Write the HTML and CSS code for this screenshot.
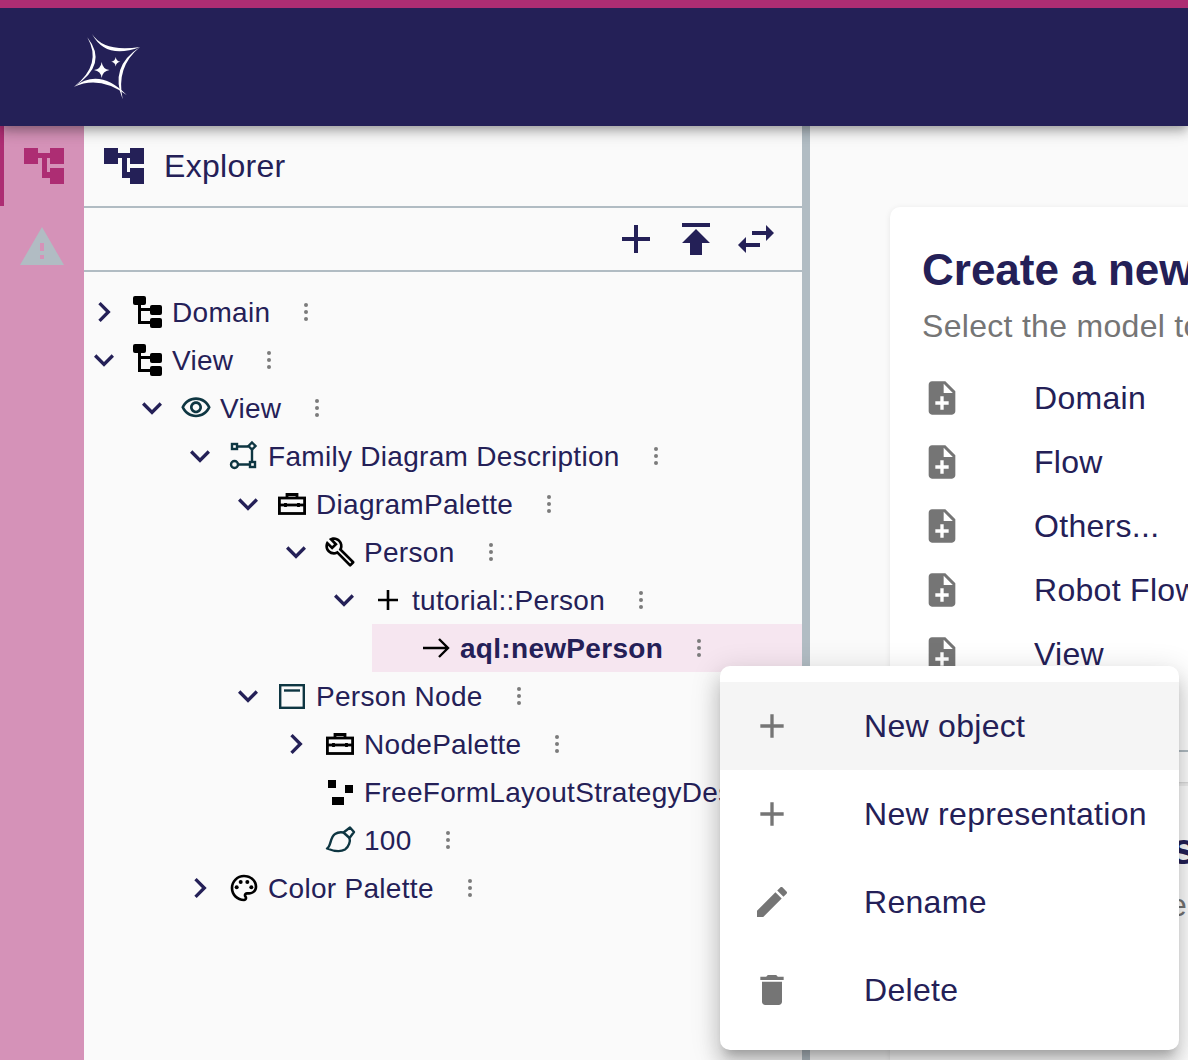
FILE: index.html
```html
<!DOCTYPE html>
<html lang="en">
<head>
    <meta charset="UTF-8">
    <title>Sirius Web</title>
    <link rel="stylesheet" href="styles.css">
</head>
<body>
<header class="navbar">
    <svg class="logo" viewBox="70 30 74 74" width="74" height="74" fill="#fff">
        <path d="M92 34Q104 52.500 140 47Q106 60 92 34Z"/>
        <path d="M140 47Q115.600 66.800 122.700 99.300Q109 66.800 140 47Z"/>
        <path d="M126.700 95Q99.600 67.200 74 86.700Q99.600 75 126.700 95Z"/>
        <path d="M74 86.700Q102.700 64.600 87.300 37.300Q109 64.600 74 86.700Z"/>
        <path d="M101.700 62Q102.500 69 109.500 70Q102.500 71 101.700 78Q100.900 71 94 70Q100.900 69 101.700 62Z"/>
        <path d="M115.700 57Q116.200 61.200 120.200 61.700Q116.200 62.200 115.700 66.400Q115.200 62.200 111.200 61.700Q115.200 61.200 115.700 57Z"/>
    </svg>
</header>

<main class="workbench">
    <nav class="rail">
        <div class="rail-item rail-item-active">
            <svg viewBox="0 0 40 36" width="40" height="36" fill="#ad2d73"><use href="#explorer-shape"/></svg>
        </div>
        <div class="rail-item">
            <svg viewBox="0 0 44 38" width="44" height="38">
                <path d="M22 0L44 38H0Z" fill="#b1bcc3"/>
                <path d="M20 16h4v8h-4zM20 28h4v4h-4z" fill="#d592b8"/>
            </svg>
        </div>
    </nav>

    <section class="explorer">
        <div class="explorer-title">
            <svg viewBox="0 0 40 36" width="40" height="36" fill="#242057">
                <path id="explorer-shape" d="M0 0h14v5h12V0h14v16H26v-6h-3v14h3v-4h14v16H26v-6h-8V10h-4v6H0z"/>
            </svg>
            <span>Explorer</span>
        </div>
        <div class="explorer-toolbar">
            <svg class="tool" viewBox="0 0 24 24"><path d="M19 13h-6v6h-2v-6H5v-2h6V5h2v6h6v2z"/></svg>
            <svg class="tool" viewBox="0 0 24 24"><path d="M5 4v2h14V4H5zm0 10h4v6h6v-6h4l-7-7-7 7z"/></svg>
            <svg class="tool" viewBox="0 0 24 24"><path d="M6.99 11L3 15l3.990 4v-3H14v-2H6.990v-3zM21 9l-3.990-4v3H10v2h7.010v3L21 9z"/></svg>
        </div>

        <ul class="tree">
            <li>
                <div class="row">
                    <svg class="chevron" viewBox="0 0 24 24"><path d="M10 6L8.590 7.410 13.170 12l-4.580 4.590L10 18l6-6z"/></svg>
                    <svg class="node-icon" viewBox="0 0 32 32"><use href="#model-shape"/></svg>
                    <span class="label">Domain</span>
                    <svg class="kebab" viewBox="0 0 6 22"><circle cx="3" cy="4" r="2"/><circle cx="3" cy="11" r="2"/><circle cx="3" cy="18" r="2"/></svg>
                </div>
            </li>
            <li>
                <div class="row">
                    <svg class="chevron" viewBox="0 0 24 24"><path d="M16.590 8.590L12 13.170 7.410 8.590 6 10l6 6 6-6z"/></svg>
                    <svg class="node-icon" viewBox="0 0 32 32">
                        <g id="model-shape">
                            <rect x="1" y="0" width="13" height="9" rx="2"/>
                            <rect x="18" y="9" width="12" height="10" rx="2"/>
                            <rect x="18" y="22" width="12" height="10" rx="2"/>
                            <path d="M7.500 9V26.500H18M7.500 13.500H18" fill="none" stroke="#000" stroke-width="3"/>
                        </g>
                    </svg>
                    <span class="label">View</span>
                    <svg class="kebab" viewBox="0 0 6 22"><circle cx="3" cy="4" r="2"/><circle cx="3" cy="11" r="2"/><circle cx="3" cy="18" r="2"/></svg>
                </div>
                <ul>
                    <li>
                        <div class="row">
                            <svg class="chevron" viewBox="0 0 24 24"><path d="M16.590 8.590L12 13.170 7.410 8.590 6 10l6 6 6-6z"/></svg>
                            <svg class="node-icon node-icon-teal" viewBox="0 0 24 24"><path d="M12 6c3.790 0 7.170 2.130 8.820 5.500C19.170 14.870 15.790 17 12 17s-7.170-2.130-8.820-5.500C4.830 8.130 8.210 6 12 6m0-2C7 4 2.730 7.110 1 11.500 2.730 15.890 7 19 12 19s9.270-3.110 11-7.500C21.270 7.110 17 4 12 4zm0 5c1.380 0 2.500 1.120 2.500 2.500S13.380 14 12 14s-2.500-1.120-2.500-2.500S10.620 9 12 9m0-2c-2.480 0-4.500 2.020-4.500 4.500S9.520 16 12 16s4.500-2.020 4.500-4.500S14.480 7 12 7z"/></svg>
                            <span class="label">View</span>
                            <svg class="kebab" viewBox="0 0 6 22"><circle cx="3" cy="4" r="2"/><circle cx="3" cy="11" r="2"/><circle cx="3" cy="18" r="2"/></svg>
                        </div>
                        <ul>
                            <li>
                                <div class="row">
                                    <svg class="chevron" viewBox="0 0 24 24"><path d="M16.590 8.590L12 13.170 7.410 8.590 6 10l6 6 6-6z"/></svg>
                                    <svg class="node-icon" viewBox="0 0 32 32" fill="none" stroke="#0e3642" stroke-width="2.400">
                                        <rect x="4" y="4" width="5" height="5"/>
                                        <path d="M24 2.500l3.500 3.500-3.500 3.500-3.500-3.500z"/>
                                        <circle cx="6.500" cy="24.500" r="3.500"/>
                                        <rect x="22" y="22" width="5" height="5"/>
                                        <path d="M9 6.500h11.500M24 9.500V22M10 24.500h12"/>
                                    </svg>
                                    <span class="label">Family Diagram Description</span>
                                    <svg class="kebab" viewBox="0 0 6 22"><circle cx="3" cy="4" r="2"/><circle cx="3" cy="11" r="2"/><circle cx="3" cy="18" r="2"/></svg>
                                </div>
                                <ul>
                                    <li>
                                        <div class="row">
                                            <svg class="chevron" viewBox="0 0 24 24"><path d="M16.590 8.590L12 13.170 7.410 8.590 6 10l6 6 6-6z"/></svg>
                                            <svg class="node-icon" viewBox="0 0 32 32">
                                                <g id="palette-shape" fill="none" stroke="#000" stroke-width="2.800">
                                                    <path d="M11 10V6.500h10V10"/>
                                                    <rect x="3.400" y="10" width="25.200" height="15.500"/>
                                                    <path d="M3.500 17h25"/>
                                                    <path d="M9.500 15v4M22.500 15v4"/>
                                                </g>
                                            </svg>
                                            <span class="label">DiagramPalette</span>
                                            <svg class="kebab" viewBox="0 0 6 22"><circle cx="3" cy="4" r="2"/><circle cx="3" cy="11" r="2"/><circle cx="3" cy="18" r="2"/></svg>
                                        </div>
                                        <ul>
                                            <li>
                                                <div class="row">
                                                    <svg class="chevron" viewBox="0 0 24 24"><path d="M16.590 8.590L12 13.170 7.410 8.590 6 10l6 6 6-6z"/></svg>
                                                    <svg class="node-icon" viewBox="0 0 24 24"><path d="M22.610 19L13.530 9.910C14.460 7.570 14 4.810 12.090 2.910C9.790 .61 6.210 .4 3.660 2.250L7.500 6.110L6.080 7.500L2.250 3.690C.39 6.230 .6 9.820 2.900 12.110C4.760 13.970 7.470 14.460 9.790 13.590L18.900 22.700C19.290 23.090 19.920 23.090 20.310 22.700L22.610 20.400C23 20 23 19.390 22.610 19M19.610 20.590L10.150 11.130C9.540 11.580 8.860 11.850 8.150 11.950C6.790 12.150 5.360 11.740 4.320 10.700C3.370 9.760 2.930 8.500 3 7.260L6.090 10.350L10.330 6.110L7.240 3C8.500 2.950 9.730 3.390 10.680 4.330C11.760 5.410 12.170 6.900 11.920 8.290C11.800 9 11.500 9.660 11.040 10.250L20.500 19.700L19.610 20.590Z"/></svg>
                                                    <span class="label">Person</span>
                                                    <svg class="kebab" viewBox="0 0 6 22"><circle cx="3" cy="4" r="2"/><circle cx="3" cy="11" r="2"/><circle cx="3" cy="18" r="2"/></svg>
                                                </div>
                                                <ul>
                                                    <li>
                                                        <div class="row">
                                                            <svg class="chevron" viewBox="0 0 24 24"><path d="M16.590 8.590L12 13.170 7.410 8.590 6 10l6 6 6-6z"/></svg>
                                                            <svg class="node-icon" viewBox="0 0 32 32"><path d="M6 16h20M16 6v20" stroke="#000" stroke-width="2.600"/></svg>
                                                            <span class="label">tutorial::Person</span>
                                                            <svg class="kebab" viewBox="0 0 6 22"><circle cx="3" cy="4" r="2"/><circle cx="3" cy="11" r="2"/><circle cx="3" cy="18" r="2"/></svg>
                                                        </div>
                                                        <ul>
                                                            <li>
                                                                <div class="row row-selected">
                                                                    <span class="chevron"></span>
                                                                    <svg class="node-icon" viewBox="0 0 32 32"><path d="M3 16h25M19 7l9 9-9 9" fill="none" stroke="#000" stroke-width="2.400"/></svg>
                                                                    <span class="label">aql:newPerson</span>
                                                                    <svg class="kebab" viewBox="0 0 6 22"><circle cx="3" cy="4" r="2"/><circle cx="3" cy="11" r="2"/><circle cx="3" cy="18" r="2"/></svg>
                                                                </div>
                                                            </li>
                                                        </ul>
                                                    </li>
                                                </ul>
                                            </li>
                                        </ul>
                                    </li>
                                    <li>
                                        <div class="row">
                                            <svg class="chevron" viewBox="0 0 24 24"><path d="M16.590 8.590L12 13.170 7.410 8.590 6 10l6 6 6-6z"/></svg>
                                            <svg class="node-icon" viewBox="0 0 32 32" fill="none" stroke="#0e3642">
                                                <rect x="4.200" y="5.200" width="23.600" height="22.600" stroke-width="2.400"/>
                                                <path d="M8 10.500h16" stroke-width="2.400"/>
                                            </svg>
                                            <span class="label">Person Node</span>
                                            <svg class="kebab" viewBox="0 0 6 22"><circle cx="3" cy="4" r="2"/><circle cx="3" cy="11" r="2"/><circle cx="3" cy="18" r="2"/></svg>
                                        </div>
                                        <ul>
                                            <li>
                                                <div class="row">
                                                    <svg class="chevron" viewBox="0 0 24 24"><path d="M10 6L8.590 7.410 13.170 12l-4.580 4.590L10 18l6-6z"/></svg>
                                                    <svg class="node-icon" viewBox="0 0 32 32"><use href="#palette-shape"/></svg>
                                                    <span class="label">NodePalette</span>
                                                    <svg class="kebab" viewBox="0 0 6 22"><circle cx="3" cy="4" r="2"/><circle cx="3" cy="11" r="2"/><circle cx="3" cy="18" r="2"/></svg>
                                                </div>
                                            </li>
                                            <li>
                                                <div class="row">
                                                    <span class="chevron"></span>
                                                    <svg class="node-icon" viewBox="0 0 32 32"><path d="M4 4h8v8H4zM21 9h8v8h-8zM8 21h12v8H8z"/></svg>
                                                    <span class="label">FreeFormLayoutStrategyDescription</span>
                                                </div>
                                            </li>
                                            <li>
                                                <div class="row">
                                                    <span class="chevron"></span>
                                                    <svg class="node-icon" viewBox="0 0 32 32" fill="none" stroke="#0e3642" stroke-width="2.400" stroke-linejoin="round">
                                                        <path d="M3 24.500C7 23 6 13 11 10C14 8 17 8 19.500 8.500L26 3.500L30 8L25.500 14C26.500 17 25 23 21 25.500C15 29 8 26.500 3 24.500Z"/>
                                                        <path d="M19.500 8.500L25.500 14"/>
                                                    </svg>
                                                    <span class="label">100</span>
                                                    <svg class="kebab" viewBox="0 0 6 22"><circle cx="3" cy="4" r="2"/><circle cx="3" cy="11" r="2"/><circle cx="3" cy="18" r="2"/></svg>
                                                </div>
                                            </li>
                                        </ul>
                                    </li>
                                </ul>
                            </li>
                            <li>
                                <div class="row">
                                    <svg class="chevron" viewBox="0 0 24 24"><path d="M10 6L8.590 7.410 13.170 12l-4.580 4.590L10 18l6-6z"/></svg>
                                    <svg class="node-icon" viewBox="0 0 24 24">
                                        <path d="M12 22C6.490 22 2 17.510 2 12S6.490 2 12 2s10 4.040 10 9c0 3.310-2.690 6-6 6h-1.770c-.28 0-.5.22-.5.5 0 .12.05.23.13.33.41.47.64 1.060.64 1.670 0 1.380-1.120 2.500-2.500 2.500zm0-18c-4.410 0-8 3.590-8 8s3.590 8 8 8c.28 0 .5-.22.5-.5 0-.16-.08-.28-.14-.35-.41-.46-.63-1.050-.63-1.650 0-1.380 1.120-2.500 2.500-2.500H16c2.210 0 4-1.790 4-4 0-3.860-3.590-7-8-7z"/>
                                        <circle cx="6.500" cy="11.500" r="1.500"/><circle cx="9.500" cy="7.500" r="1.500"/><circle cx="14.500" cy="7.500" r="1.500"/><circle cx="17.500" cy="11.500" r="1.500"/>
                                    </svg>
                                    <span class="label">Color Palette</span>
                                    <svg class="kebab" viewBox="0 0 6 22"><circle cx="3" cy="4" r="2"/><circle cx="3" cy="11" r="2"/><circle cx="3" cy="18" r="2"/></svg>
                                </div>
                            </li>
                        </ul>
                    </li>
                </ul>
            </li>
        </ul>
    </section>

    <div class="splitter"></div>

    <section class="onboard">
        <div class="card">
            <h2 class="card-title">Create a new Model</h2>
            <p class="card-subtitle">Select the model to create</p>
            <ul class="card-list">
                <li><svg class="file-icon" viewBox="0 0 24 24"><use href="#file-add"/></svg><span>Domain</span></li>
                <li><svg class="file-icon" viewBox="0 0 24 24"><use href="#file-add"/></svg><span>Flow</span></li>
                <li><svg class="file-icon" viewBox="0 0 24 24"><use href="#file-add"/></svg><span>Others...</span></li>
                <li><svg class="file-icon" viewBox="0 0 24 24"><use href="#file-add"/></svg><span>Robot Flow</span></li>
                <li><svg class="file-icon" viewBox="0 0 24 24"><path id="file-add" d="M14 2H6c-1.100 0-1.990.9-1.990 2L4 20c0 1.100.89 2 1.990 2H18c1.100 0 2-.9 2-2V8l-6-6zm2 14h-3v3h-2v-3H8v-2h3v-3h2v3h3v2zm-3-7V3.500L18.500 9H13z"/></svg><span>View</span></li>
            </ul>
            <div class="card-footer"></div>
        </div>
        <div class="card card-tall">
            <h2 class="card-title">Open an existing Representation</h2>
            <p class="card-subtitle">Select the representation to open</p>
        </div>
    </section>

    <div class="menu">
        <div class="menu-item menu-item-hover">
            <svg class="menu-icon" viewBox="0 0 24 24"><path d="M19 13h-6v6h-2v-6H5v-2h6V5h2v6h6v2z"/></svg>
            <span>New object</span>
        </div>
        <div class="menu-item">
            <svg class="menu-icon" viewBox="0 0 24 24"><path d="M19 13h-6v6h-2v-6H5v-2h6V5h2v6h6v2z"/></svg>
            <span>New representation</span>
        </div>
        <div class="menu-item">
            <svg class="menu-icon" viewBox="0 0 24 24"><path d="M3 17.250V21h3.750L17.810 9.940l-3.750-3.750L3 17.250zM20.710 7.040c.39-.39.39-1.020 0-1.410l-2.340-2.340c-.39-.39-1.020-.39-1.410 0l-1.830 1.830 3.750 3.750 1.830-1.830z"/></svg>
            <span>Rename</span>
        </div>
        <div class="menu-item">
            <svg class="menu-icon" viewBox="0 0 24 24"><path d="M6 19c0 1.100.9 2 2 2h8c1.100 0 2-.9 2-2V7H6v12zM19 4h-3.500l-1-1h-5l-1 1H5v2h14V4z"/></svg>
            <span>Delete</span>
        </div>
    </div>
</main>
</body>
</html>
```

FILE: styles.css
```css
* {
    box-sizing: border-box;
}

html, body {
    margin: 0;
    height: 100%;
    overflow: hidden;
}

body {
    display: flex;
    flex-direction: column;
    font-family: "Liberation Sans", Arial, sans-serif;
    color: #242057;
    background-color: #fafafa;
}

ul {
    list-style: none;
    margin: 0;
    padding: 0;
}

.navbar {
    position: relative;
    z-index: 2;
    flex: none;
    display: flex;
    align-items: center;
    height: 126px;
    padding-left: 70px;
    background-color: #242057;
    border-top: 8px solid #ad2d73;
    box-shadow: 0 4px 8px -2px rgba(0, 0, 0, .2), 0 8px 10px 0 rgba(0, 0, 0, .14), 0 2px 20px 0 rgba(0, 0, 0, .12);
}

.workbench {
    position: relative;
    flex: 1;
    display: flex;
    min-height: 0;
}

.rail {
    flex: none;
    width: 84px;
    background-color: #d592b8;
}

.rail-item {
    display: flex;
    align-items: center;
    justify-content: center;
    height: 80px;
}

.rail-item-active {
    justify-content: flex-start;
    padding-left: 20px;
    border-left: 4px solid #ad2d73;
}

.explorer {
    flex: none;
    width: 718px;
    overflow: hidden;
}

.explorer-title {
    display: flex;
    align-items: center;
    gap: 20px;
    height: 82px;
    padding-left: 20px;
    font-size: 32px;
    letter-spacing: .3px;
    border-bottom: 2px solid #b1bcc3;
}

.explorer-toolbar {
    display: flex;
    justify-content: flex-end;
    gap: 12px;
    height: 64px;
    padding: 7px 22px 0 0;
    border-bottom: 2px solid #b1bcc3;
}

.tool {
    width: 48px;
    height: 48px;
    fill: #242057;
}

.tree {
    padding-top: 16px;
}

.tree ul {
    padding-left: 48px;
}

.row {
    display: flex;
    align-items: center;
    height: 48px;
    white-space: nowrap;
}

.row-selected {
    background-color: #f6e6f0;
    font-weight: 700;
}

.chevron {
    flex: none;
    width: 40px;
    height: 40px;
    fill: #242057;
}

.node-icon {
    flex: none;
    width: 32px;
    height: 32px;
    margin: 0 8px;
}

.node-icon-teal {
    fill: #0e3642;
}

.label {
    padding-top: 2px;
    font-size: 28px;
    letter-spacing: .3px;
}

.kebab {
    flex: none;
    width: 6px;
    height: 22px;
    margin-left: 33px;
    fill: #7b7b7b;
}

.splitter {
    flex: none;
    width: 8px;
    background-color: #b1bcc3;
}

.onboard {
    flex: 1;
    min-width: 0;
    padding: 81px 0 0 80px;
    overflow: hidden;
}

.card {
    width: 600px;
    margin-bottom: 4px;
    padding: 33px 32px 0;
    background-color: #fff;
    border-radius: 10px;
    box-shadow: 0 2px 2px -1px rgba(0, 0, 0, .1), 0 1px 6px 0 rgba(0, 0, 0, .08);
}

.card-tall {
    min-height: 400px;
}

.card-title {
    margin: 0;
    font-size: 44px;
    line-height: 60px;
    font-weight: 700;
    white-space: nowrap;
}

.card-subtitle {
    margin: 2px 0 16px;
    font-size: 32px;
    line-height: 48px;
    letter-spacing: .3px;
    color: #757575;
    white-space: nowrap;
}

.card-list {
    padding-bottom: 64px;
    border-bottom: 2px solid #b1bcc3;
}

.card-list li {
    display: flex;
    align-items: center;
    height: 64px;
    font-size: 32px;
    letter-spacing: .3px;
}

.file-icon {
    flex: none;
    width: 40px;
    height: 40px;
    margin-right: 72px;
    fill: #757575;
}

.card-footer {
    height: 30px;
}

.menu {
    position: absolute;
    left: 720px;
    top: 540px;
    width: 459px;
    padding: 16px 0;
    background-color: #fff;
    border-radius: 10px;
    box-shadow: 0 10px 10px -6px rgba(0, 0, 0, .2), 0 16px 20px 2px rgba(0, 0, 0, .14), 0 6px 28px 4px rgba(0, 0, 0, .12);
}

.menu-item {
    display: flex;
    align-items: center;
    height: 88px;
    padding-left: 32px;
    font-size: 32px;
    letter-spacing: .3px;
    white-space: nowrap;
}

.menu-item-hover {
    background-color: #f5f5f5;
}

.menu-icon {
    flex: none;
    width: 40px;
    height: 40px;
    margin-right: 72px;
    fill: #757575;
}
```
